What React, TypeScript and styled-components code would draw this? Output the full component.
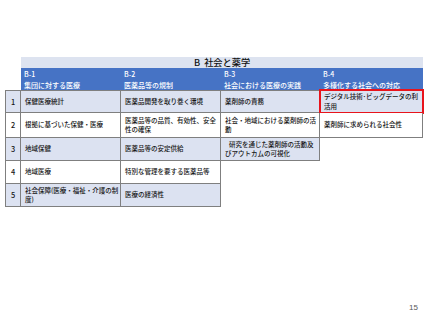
import React from "react";
import styled, { createGlobalStyle } from "styled-components";

const Global = createGlobalStyle`
  html, body { margin: 0; padding: 0; background: #ffffff; }
  body { font-family: "Noto Sans CJK JP", "Noto Sans", sans-serif; color: #1a1a1a; }
`;

const Slide = styled.div`
  width: 427px;
  height: 320px;
  display: flex;
  flex-direction: column;
  box-sizing: border-box;
  padding: 57px 0 0 5px;
`;

const Table = styled.div`
  display: grid;
  grid-template-columns: 16px 100px 100px 99px 103px;
  grid-template-rows: 11px 22px 23px 25px 23px 23px 23px;
`;

const Title = styled.div`
  grid-column: 2 / 6;
  background: #dde3f0;
  font-size: 9.2px;
  font-weight: 500;
  line-height: 11px;
  text-align: center;
  color: #111;
  white-space: pre;
`;

const Spacer = styled.div``;

const HeadCell = styled.div`
  background: #4673c5;
  color: #ffffff;
  font-size: 7px;
  font-weight: 500;
  line-height: 10.5px;
  padding: 1px 0 0 3px;
  display: flex;
  flex-direction: column;
  white-space: nowrap;
`;

const Cell = styled.div<{ $shade?: boolean; $top?: boolean; $left?: boolean; $num?: boolean; $mark?: boolean }>`
  box-sizing: border-box;
  background: ${(p) => (p.$shade ? "#dce2f1" : "#ffffff")};
  border-right: 1px solid #7f7f7f;
  border-bottom: 1px solid #7f7f7f;
  border-top: ${(p) => (p.$top ? "1px solid #7f7f7f" : "none")};
  border-left: ${(p) => (p.$left ? "1px solid #7f7f7f" : "none")};
  font-size: ${(p) => (p.$num ? "7.4px" : "6.5px")};
  font-weight: 500;
  line-height: 9.5px;
  padding: ${(p) => (p.$num ? "0" : "0 0 0 4px")};
  display: flex;
  align-items: center;
  justify-content: ${(p) => (p.$num ? "center" : "flex-start")};
  color: #161616;
  outline: ${(p) => (p.$mark ? "2px solid #e8141c" : "none")};
  outline-offset: -1px;
  position: relative;
`;

const CellText = styled.span<{ $indent?: boolean }>`
  display: block;
  text-indent: ${(p) => (p.$indent ? "4px" : "0")};
`;

const Footer = styled.div`
  margin-top: auto;
  display: flex;
  justify-content: flex-end;
  padding: 0 9px 8px 0;
  font-family: "Liberation Sans", Arial, sans-serif;
  font-size: 8px;
  color: #595959;
`;

type Row = { n: string; cells: (string | null)[]; mark?: number; indent?: number };

const heads = [
  ["B-1", "集団に対する医療"],
  ["B-2", "医薬品等の規制"],
  ["B-3", "社会における医療の実践"],
  ["B-4", "多様化する社会への対応"],
];

const rows: Row[] = [
  { n: "1", cells: ["保健医療統計", "医薬品開発を取り巻く環境", "薬剤師の責務", "デジタル技術･ビッグデータの利活用"], mark: 3 },
  { n: "2", cells: ["根拠に基づいた保健・医療", "医薬品等の品質、有効性、安全性の確保", "社会・地域における薬剤師の活動", "薬剤師に求められる社会性"] },
  { n: "3", cells: ["地域保健", "医薬品等の安定供給", "研究を通じた薬剤師の活動及びアウトカムの可視化", null], indent: 2 },
  { n: "4", cells: ["地域医療", "特別な管理を要する医薬品等", null, null] },
  { n: "5", cells: ["社会保障(医療・福祉・介護の制度)", "医療の経済性", null, null] },
];

export default function App() {
  return (
    <>
      <Global />
      <Slide>
        <Table>
          <Spacer />
          <Title>{"B  社会と薬学"}</Title>
          <Spacer />
          {heads.map(([code, name]) => (
            <HeadCell key={code}>
              <span>{code}</span>
              <span>{name}</span>
            </HeadCell>
          ))}
          {rows.map((r, ri) => {
            const shade = ri % 2 === 0;
            return (
              <React.Fragment key={r.n}>
                <Cell $num $left $top={ri === 0} $shade={shade}>
                  {r.n}
                </Cell>
                {r.cells.map((c, ci) =>
                  c === null ? (
                    <Spacer key={ci} />
                  ) : (
                    <Cell key={ci} $top={ri === 0} $shade={shade} $mark={r.mark === ci}>
                      <CellText $indent={r.indent === ci}>{c}</CellText>
                    </Cell>
                  )
                )}
              </React.Fragment>
            );
          })}
        </Table>
        <Footer>15</Footer>
      </Slide>
    </>
  );
}
